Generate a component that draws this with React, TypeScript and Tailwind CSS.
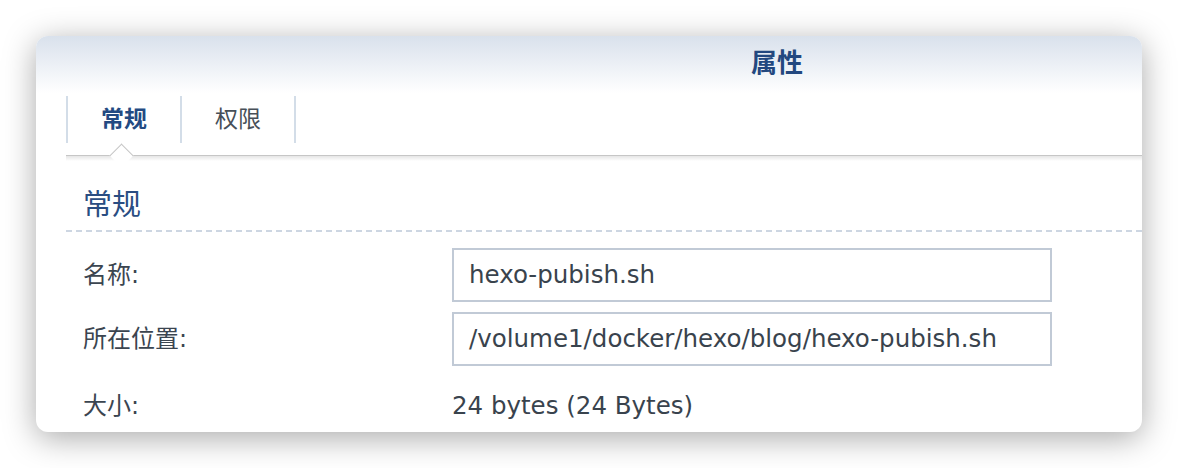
const latin = "font-['DejaVu_Sans','Noto_Sans_CJK_SC',sans-serif]";

type Row = { label: string; value: string; input?: boolean };

const rows: Row[] = [
  { label: "名称:", value: "hexo-pubish.sh", input: true },
  { label: "所在位置:", value: "/volume1/docker/hexo/blog/hexo-pubish.sh", input: true },
  { label: "大小:", value: "24 bytes (24 Bytes)" },
];

function Tab({ label, active }: { label: string; active?: boolean }) {
  return (
    <div
      className={
        "flex h-full w-[114px] items-center justify-center border-r-2 border-[#d3dde8] text-[23px] " +
        (active ? "font-bold text-[#234a82]" : "font-normal text-[#474f58]")
      }
    >
      {label}
    </div>
  );
}

export default function App() {
  return (
    <div className={"h-[468px] w-[1178px] bg-white p-[36px] " + latin}>
      <div className="flex h-[396px] w-[1106px] flex-col overflow-hidden rounded-[12px] bg-white shadow-[0_6px_32px_rgba(0,0,0,0.34)]">
        {/* title bar */}
        <div className="h-[60px] shrink-0 bg-gradient-to-b from-[#d9e1ec] to-white to-95% pl-[715px] pt-[11px]">
          <span className="text-[26px] font-bold leading-[32px] text-[#23487f]">属性</span>
        </div>

        {/* tabs */}
        <div className="ml-[30px]">
          <div className="flex h-[47px] border-l-2 border-[#d3dde8]">
            <Tab label="常规" active />
            <Tab label="权限" />
          </div>
          <div className="h-[12px]" />
          <div className="relative border-t border-[#c6c6c6]">
            <div className="absolute left-[47px] top-[-9px] h-[17px] w-[17px] rotate-45 border-l border-t border-[#c6c6c6] bg-white" />
            <div className="h-[5px] bg-gradient-to-b from-[rgba(0,0,0,0.1)] to-transparent" />
          </div>
        </div>

        {/* section */}
        <div className="ml-[30px] mt-[26px]">
          <div className="pl-[17px] text-[29px] leading-[36px] text-[#2a4d82]">常规</div>
          <div className="mt-[7px] h-[2px] bg-[repeating-linear-gradient(90deg,#cdd6e2_0_6px,transparent_6px_10px)]" />
        </div>

        <div className="mt-[16px] flex flex-col gap-[10px] pl-[47px]">
          {rows.map((r, i) => (
            <div key={i} className={"flex items-center " + (r.input ? "" : "mt-[12px]")}>
              <div className="w-[369px] text-[24px] text-[#3b4550]">{r.label}</div>
              {r.input ? (
                <div className="flex h-[54px] w-[600px] items-center border-2 border-[#c1cad6] pl-[15px] text-[24.5px] text-[#39434d]">
                  {r.value}
                </div>
              ) : (
                <div className="text-[24.5px] leading-[30px] text-[#39434d]">{r.value}</div>
              )}
            </div>
          ))}
        </div>
      </div>
    </div>
  );
}
